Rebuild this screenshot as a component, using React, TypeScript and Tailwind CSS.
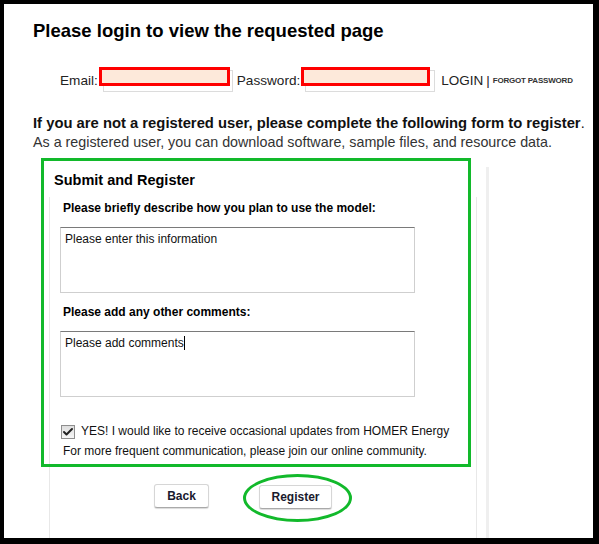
import { Check } from "lucide-react"

const GREEN = "border-[#12b92b]"

export default function App() {
  return (
    <div
      className="w-[599px] h-[544px] bg-black pl-[4px] pt-[4px] pr-[6px] pb-[6px]"
      style={{ fontFamily: '"Liberation Sans", Arial, sans-serif' }}
    >
      <div className="relative h-full bg-white overflow-hidden text-[#111]">
        {/* heading */}
        <h1 className="pl-[29px] pt-[16px] text-[18.5px] leading-[22px] font-bold text-black">
          Please login to view the requested page
        </h1>

        {/* login row */}
        <div className="mt-[28px] ml-[56px] flex items-center text-[13.6px] text-[#222]">
          <span>Email:</span>
          <div className="relative ml-[5px] w-[130px] h-[22px] border border-[#dcdcdc] bg-white">
            <div className="absolute left-[-5px] top-[-4px] w-[131px] h-[19px] border-[3px] border-[#ff0000] bg-[#fde9da]" />
          </div>
          <span className="ml-[4px]">Password:</span>
          <div className="relative ml-[5px] w-[130px] h-[22px] border border-[#dcdcdc] bg-white">
            <div className="absolute left-[-5px] top-[-4px] w-[129px] h-[19px] border-[3px] border-[#ff0000] bg-[#fde9da]" />
          </div>
          <span className="ml-[6px] text-[13.5px]">LOGIN</span>
          <span className="ml-[3px] text-[13.5px]">|</span>
          <span className="ml-[3px] text-[8px] font-bold tracking-[-0.2px] text-[#333]">FORGOT PASSWORD</span>
        </div>

        {/* intro */}
        <div className="mt-[22px] pl-[29px] text-[14.3px] leading-[19px] text-[#111]">
          <p>
            <span className="font-bold text-[14.8px]">
              If you are not a registered user, please complete the following form to register
            </span>
            .
          </p>
          <p className="text-[#333]">As a registered user, you can download software, sample files, and resource data.</p>
        </div>

        {/* register panel */}
        <div className="relative ml-[37px] mt-[6px] w-[430px]">
          <div className="absolute left-[8px] top-[39px] w-[428px] h-[400px] border-l border-r border-[#e8e8e8]" />
          <div className="absolute left-[445px] top-[9px] w-[3px] h-[400px] bg-[#efefef]" />

          <div className={`relative border-[3px] ${GREEN} pl-[10px] pt-[11px] pb-[5px]`}>
            <h2 className="text-[14.5px] leading-[17px] font-bold text-black">Submit and Register</h2>

            <div className="pl-[9px]">
              <p className="mt-[12px] text-[12px] leading-[15px] font-bold text-black">
                Please briefly describe how you plan to use the model:
              </p>
              <div className="mt-[11px] -ml-[3px] w-[355px] h-[66px] border border-[#cfcfcf] border-t-[#7a7a7a] px-[4px] pt-[4px] text-[12px] leading-[15px] text-[#111]">
                Please enter this information
              </div>

              <p className="mt-[12px] text-[12px] leading-[15px] font-bold text-black">
                Please add any other comments:
              </p>
              <div className="mt-[11px] -ml-[3px] w-[355px] h-[66px] border border-[#cfcfcf] border-t-[#7a7a7a] px-[4px] pt-[4px] text-[12px] leading-[15px] text-[#111]">
                Please add comments<span className="inline-block w-px h-[14px] bg-black align-[-3px]" />
              </div>

              <div className="mt-[27px] -ml-[2px] flex items-center gap-[6px] text-[12px] leading-[15px] text-[#111]">
                <div className="w-[14px] h-[14px] border border-[#8e8e8e] bg-gradient-to-b from-[#dedede] to-[#f6f6f6] flex items-center justify-center">
                  <Check className="w-[12px] h-[12px] text-[#222]" strokeWidth={4} />
                </div>
                <span className="whitespace-nowrap">YES! I would like to receive occasional updates from HOMER Energy</span>
              </div>
              <p className="mt-[5px] text-[12px] leading-[15px] text-[#111] whitespace-nowrap">
                For more frequent communication, please join our online community.
              </p>
            </div>
          </div>

          {/* buttons */}
          <div className="relative mt-[17px] flex gap-[50px] pl-[113px]">
            <button className="w-[55px] h-[24px] rounded-[3px] border border-[#d6d6d6] border-b-[#a9a9a9] bg-white shadow-[0_1px_1px_rgba(0,0,0,0.15)] text-[12px] font-bold text-[#1a1a2e]">
              Back
            </button>
            <div className="relative">
              <button className="w-[73px] h-[24px] rounded-[3px] border border-[#d6d6d6] border-b-[#a9a9a9] bg-white shadow-[0_1px_1px_rgba(0,0,0,0.15)] text-[12px] font-bold text-[#1a1a2e]">
                Register
              </button>
              <div className={`absolute left-[-16px] top-[-10px] w-[109px] h-[48px] rounded-[50%] border-[3px] ${GREEN}`} />
            </div>
          </div>
        </div>
      </div>
    </div>
  )
}
